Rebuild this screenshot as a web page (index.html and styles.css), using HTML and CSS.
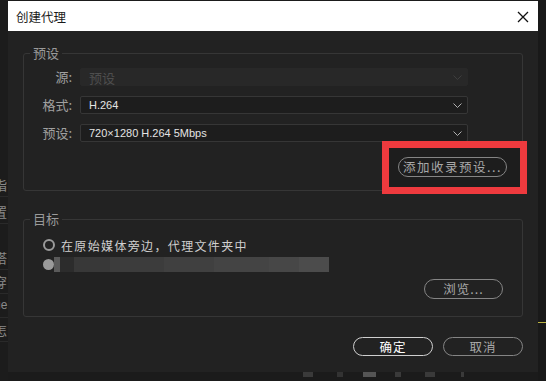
FILE: index.html
```html
<!DOCTYPE html>
<html lang="zh-CN">
<head>
  <meta charset="UTF-8">
  <title>创建代理</title>
  <link rel="stylesheet" href="styles.css">
</head>
<body>

  <div class="app-edge">
    <div class="edge-item edge-first">指</div>
    <div class="edge-item edge-second">置</div>
    <div class="edge-item edge-gap">搭</div>
    <div class="edge-item">穿</div>
    <div class="edge-item edge-latin">ue</div>
    <div class="edge-item">怎</div>
  </div>

  <div class="center">
    <div class="dialog">
      <div class="titlebar">
        <span class="title">创建代理</span>
        <svg class="close" width="12" height="12" viewBox="0 0 12 12">
          <path d="M1 1 L11 11 M11 1 L1 11" stroke="#111" stroke-width="1.3" fill="none"/>
        </svg>
      </div>

      <div class="dialog-body">
        <fieldset class="group preset">
          <legend>预设</legend>

          <div class="field">
            <label>源:</label>
            <div class="select disabled">
              <span>预设</span>
              <svg class="chevron" width="9" height="5" viewBox="0 0 9 5"><path d="M0.5 0.5 L4.5 4.5 L8.5 0.5" stroke="#3e3e3e" fill="none"/></svg>
            </div>
          </div>

          <div class="field">
            <label>格式:</label>
            <div class="select">
              <span class="latin">H.264</span>
              <svg class="chevron" width="9" height="5" viewBox="0 0 9 5"><path d="M0.5 0.5 L4.5 4.5 L8.5 0.5" stroke="#b0b0b0" fill="none"/></svg>
            </div>
          </div>

          <div class="field">
            <label>预设:</label>
            <div class="select">
              <span class="latin">720×1280 H.264 5Mbps</span>
              <svg class="chevron" width="9" height="5" viewBox="0 0 9 5"><path d="M0.5 0.5 L4.5 4.5 L8.5 0.5" stroke="#b0b0b0" fill="none"/></svg>
            </div>
          </div>

          <div class="group-actions">
            <span class="highlight">
              <button class="pill add">添加收录预设...</button>
            </span>
          </div>
        </fieldset>

        <fieldset class="group target">
          <legend>目标</legend>

          <div class="radio-row">
            <span class="radio"></span>
            <span class="radio-label">在原始媒体旁边，代理文件夹中</span>
          </div>
          <div class="radio-row">
            <span class="radio checked"></span>
            <span class="blurred"></span>
          </div>

          <div class="group-actions">
            <button class="pill browse">浏览...</button>
          </div>
        </fieldset>

        <div class="footer">
          <button class="pill primary">确定</button>
          <button class="pill">取消</button>
        </div>
      </div>
    </div>

    <div class="taskbar">
      <span class="tb tb1"></span>
      <span class="tb tb2"></span>
      <span class="tb tb3"></span>
      <span class="tb tb4"></span>
      <span class="tb tb5"></span>
      <span class="tb tb6"></span>
    </div>
  </div>

  <div class="app-edge right">
    <div class="edge-mark"></div>
  </div>

</body>
</html>
```

FILE: styles.css
```css
body {
  margin: 0;
  width: 546px;
  height: 381px;
  overflow: hidden;
  display: flex;
  background: #1b1b1b;
  font-family: "Noto Sans CJK SC", "Liberation Sans", sans-serif;
}

/* background app, cut off at the left */
.app-edge {
  width: 8px;
  flex: none;
  overflow: hidden;
  background: #1c1c1c;
  color: #8a8a8a;
  font-size: 13px;
}

.edge-item {
  margin-left: -6px;
  white-space: nowrap;
  height: 23px;
  line-height: 23px;
  border-bottom: 1px solid #2a2a2a;
}

.edge-first {
  margin-top: 173px;
}

.edge-second {
  margin-top: 3px;
}

.edge-gap {
  margin-top: 22px;
}

.edge-latin {
  font-family: "Liberation Sans", sans-serif;
  font-size: 12px;
}

.app-edge.right {
  background: #191919;
}

.edge-mark {
  margin-top: 322px;
  height: 1px;
  background: #b8b040;
}

.center {
  width: 530px;
  flex: none;
  display: flex;
  flex-direction: column;
}

.dialog {
  margin-top: 1px;
  height: 371px;
  background: #222222;
  display: flex;
  flex-direction: column;
}

.titlebar {
  height: 30px;
  background: #ffffff;
  display: flex;
  align-items: center;
  justify-content: space-between;
  padding: 0 9px 0 8px;
}

.title {
  font-size: 12.5px;
  color: #1a1a1a;
}

.close {
  margin-top: 1px;
}

.dialog-body {
  padding: 14px 15px 15px 15px;
}

.group {
  margin: 0;
  border: 1px solid #363636;
  border-radius: 3px;
  padding: 7px 15px 13px 15px;
  width: 500px;
  box-sizing: border-box;
}

.group legend {
  font-size: 13px;
  line-height: 16px;
  color: #9a9a9a;
  padding: 0 3px;
  margin-left: -9px;
}

.field {
  display: grid;
  grid-template-columns: 33px 388px;
  column-gap: 8px;
  align-items: center;
  height: 18px;
  margin-bottom: 10px;
}

.field label {
  text-align: right;
  font-size: 13px;
  color: #a0a0a0;
  line-height: 18px;
}

.select {
  height: 18px;
  box-sizing: border-box;
  border: 1px solid #363636;
  border-radius: 2px;
  background: #1d1d1d;
  display: flex;
  align-items: center;
  justify-content: space-between;
  padding: 0 5px 0 8px;
  color: #e4e4e4;
  font-size: 12px;
}

.select.disabled {
  background: #282828;
  border-color: #282828;
  color: #4e4e4e;
  font-size: 13px;
}

.latin {
  font-family: "Liberation Sans", sans-serif;
  font-size: 11px;
}

.group-actions {
  display: flex;
  justify-content: flex-end;
}

.preset .group-actions {
  margin-top: 15px;
}

.highlight {
  position: relative;
  display: inline-flex;
}

.highlight::before {
  content: "";
  position: absolute;
  top: -16px;
  left: -16px;
  right: -20px;
  bottom: -17px;
  border: 7px solid #ee3a3e;
  background: #1d1d1d;
}

.pill {
  position: relative;
  height: 19px;
  width: 80px;
  padding: 0;
  border: 1px solid #858585;
  border-radius: 10px;
  background: transparent;
  color: #a8a8a8;
  font-family: "Noto Sans CJK SC", sans-serif;
  font-size: 12.5px;
  line-height: 16px;
  letter-spacing: 1px;
}

.pill.add {
  width: 109px;
  height: 20px;
  letter-spacing: 1.5px;
}

.pill.browse {
  width: 79px;
  height: 20px;
  margin-right: 4px;
}

.pill.primary {
  border-color: #cfcfcf;
  color: #ffffff;
}

.target {
  margin-top: 20px;
  padding-top: 10px;
  padding-bottom: 17px;
}

.radio-row {
  display: flex;
  align-items: center;
  height: 16px;
  padding-left: 4px;
  gap: 6px;
}

.radio-row + .radio-row {
  margin-top: 3px;
}

.radio {
  width: 12px;
  height: 12px;
  box-sizing: border-box;
  border: 2px solid #9a9a9a;
  border-radius: 50%;
  flex: none;
}

.radio.checked {
  width: 11px;
  height: 11px;
  border: none;
  background: #9a9a9a;
}

.radio-label {
  font-size: 12px;
  letter-spacing: 1.35px;
  color: #cfcfcf;
}

.blurred {
  margin-left: -6px;
  width: 275px;
  height: 15px;
  filter: blur(0.6px);
  background: linear-gradient(to right,
    #5a5a5a 0px, #5a5a5a 6px,
    #2c2c2c 6px, #2c2c2c 20px,
    #383838 20px, #383838 56px,
    #3c3c3c 56px, #3c3c3c 110px,
    #404040 110px, #404040 160px,
    #444444 160px, #444444 215px,
    #474747 215px, #474747 245px,
    #4c4c4c 245px, #4c4c4c 275px);
}

.target .group-actions {
  margin-top: 7px;
}

.footer {
  margin-top: 20px;
  display: flex;
  justify-content: flex-end;
  gap: 10px;
}

/* bits of the app underneath */
.taskbar {
  flex: 1;
  display: flex;
  align-items: flex-start;
  padding-left: 295px;
  gap: 10px;
}

.tb {
  height: 5px;
  background: #3a3a3a;
}

.tb1 { width: 10px; }
.tb2 { width: 6px; margin-left: 14px; background: #333; }
.tb3 { width: 13px; margin-left: 10px; background: #555; }
.tb4 { width: 6px; margin-left: 9px; }
.tb5 { width: 10px; margin-left: 14px; }
.tb6 { width: 3px; margin-left: 16px; }
```
